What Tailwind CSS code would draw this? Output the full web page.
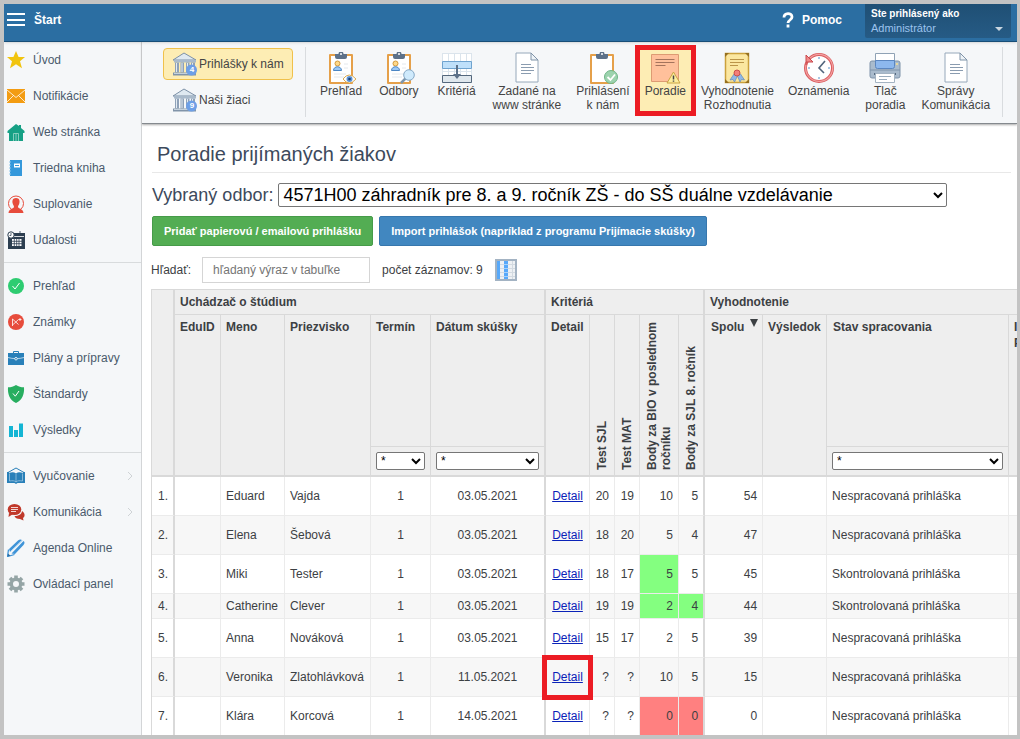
<!DOCTYPE html>
<html lang="sk">
  <head>
    <meta charset="UTF-8" />
    <meta name="viewport" content="width=device-width, initial-scale=1.0" />
    <title>Poradie prijímaných žiakov</title>
    <script src="https://cdn.jsdelivr.net/npm/@tailwindcss/browser@4"></script>
  </head>
  <body class="h-screen overflow-hidden flex flex-col bg-white border-4 border-r-3 border-[#c3c3c3] font-['Liberation_Sans',Arial,sans-serif] text-xs text-[#3c4043]">

    <!-- shared icon shapes -->
    <svg class="hidden">
      <symbol id="building" viewBox="0 0 26 26">
        <path d="M1 9 L12 2 L24 9Z" fill="#dfe9f1" stroke="#7d91a7" />
        <path d="M2 9h22v2.500H2z" fill="#a9bacb" />
        <path d="M3 11.500h4v10H3zM8.500 11.500h3.500v10H8.500zM14 11.500h3.500v10H14zM19 11.500h4v10h-4z" fill="#8ea1b8" />
        <path d="M4.500 12v9M10 12v9M15.500 12v9M20.500 12v9" stroke="#e3ebf2" />
        <path d="M1 21.500h23v3H1z" fill="#8194a9" />
        <path d="M2 22.500h21" stroke="#c4d1dc" />
        <circle cx="19.500" cy="19" r="5.500" fill="#6e9fe6" />
      </symbol>
      <symbol id="clipboard" viewBox="0 0 28 32">
        <rect x="2" y="2" width="24" height="30" rx="1" fill="#e5a04a" />
        <rect x="4" y="4" width="20" height="26" fill="#fff" />
        <path d="M8 2h3.500a2.500 2.500 0 0 1 5 0h3.500v3q0 2-2 2h-8q-2 0-2-2z" fill="#5d7189" />
        <circle cx="14" cy="2" r="1" fill="#fff" />
      </symbol>
      <symbol id="person" viewBox="0 0 28 32">
        <circle cx="10.500" cy="11.500" r="2.500" fill="#ffd98a" stroke="#d39a3c" />
        <path d="M6.500 18.500c0-5 8-5 8 0z" fill="#9cc8f5" stroke="#4b86c4" />
        <path d="M17 12h4M17 16h4M7 22h12M7 25h10" stroke="#e4e8ec" />
      </symbol>
      <symbol id="page" viewBox="0 0 24 32">
        <path d="M1 1h15l7 7v22H1z" fill="#fff" stroke="#96a8ba" />
        <path d="M16 1v7h7z" fill="#eef3f7" stroke="#7f93a8" />
        <path d="M6 12.500h10M6 15.500h13M6 18.500h13M6 21.500h10" stroke="#8a9cb0" />
      </symbol>
    </svg>

    <header class="relative z-10 shrink-0 h-[38px] flex items-start bg-[#2b6ea2] border-b border-[#174e78] shadow text-white">
      <button aria-label="Menu" class="ml-[3px] mt-2 w-[18px] h-[15px] flex flex-col justify-between py-px">
        <span class="h-0.5 w-full bg-white"></span>
        <span class="h-0.5 w-full bg-white"></span>
        <span class="h-0.5 w-full bg-white"></span>
      </button>
      <a href="#" class="ml-[9px] mt-2 leading-4 font-bold">Štart</a>
      <a href="#" class="ml-auto mt-[7px] flex items-center gap-2 leading-4 font-bold">
        <svg class="w-3 h-[18px]" viewBox="0 0 12 18" fill="none" stroke="#fff" stroke-width="2.800">
          <path d="M2 6.500C2 1.500 10 1.500 10 6c0 3-4 3-4 6" />
          <path d="M6 13.500v3" />
        </svg>
        Pomoc
      </a>
      <button class="ml-[23px] mr-[6px] w-[146px] h-[34px] px-[6px] pt-1 flex items-end justify-between text-left bg-linear-to-b from-[#1f4f74] to-[#265b85] rounded-b-xs">
        <span class="self-start">
          <span class="block text-[10px] leading-3 font-bold">Ste prihlásený ako</span>
          <span class="block text-[11px] leading-4 text-[#9cc3ee]">Administrátor</span>
        </span>
        <svg class="w-2 h-1 mb-[7px] mr-0.5" viewBox="0 0 8 4"><path d="M0 0h8L4 4z" fill="#c9d6e0" /></svg>
      </button>
    </header>

    <div class="flex-1 min-h-0 flex">
      <nav class="shrink-0 w-[138px] bg-[#f5f7f9] border-r border-[#d3d5d7] text-[#4a5a6c]">
        <a href="#" class="flex items-center h-9 pl-[3px] gap-[8px]">
          <svg class="w-[18px] h-[18px]" viewBox="0 0 18 18"><path d="M9 0l2.600 6H18l-5 4.300 2 7-6-4-6 4 2-7-5-4.300h6.400z" fill="#f1c40f" /></svg>
          Úvod
        </a>
        <a href="#" class="flex items-center h-9 pl-[3px] gap-[8px]">
          <svg class="w-[18px] h-[18px]" viewBox="0 0 18 18"><path d="M0 2h18v14H0z" fill="#f39c12" /><path d="M0 3l9 7.500L18 3M0 15l6.500-6.500M18 15l-6.500-6.500" fill="none" stroke="#fff" stroke-width=".8" /></svg>
          Notifikácie
        </a>
        <a href="#" class="flex items-center h-9 pl-[3px] gap-[8px]">
          <svg class="w-[18px] h-[18px]" viewBox="0 0 18 18"><path d="M9 1l3 2V2h2v3l3.500 3v2H16v8H2v-8H.500V8z" fill="#16a085" /><path d="M6.500 18v-7.500h5V18M9 10.500V18" fill="none" stroke="#9fd8cb" stroke-width=".8" /></svg>
          Web stránka
        </a>
        <a href="#" class="flex items-center h-9 pl-[3px] gap-[8px]">
          <svg class="w-[18px] h-[18px]" viewBox="0 0 18 18"><path d="M3 1h12v16H3z" fill="#3498db" /><path d="M2 3h2M2 6h2M2 9h2M2 12h2M2 15h2" stroke="#8fc6ea" /><path d="M7 4.500h6v4H7z" fill="#fff" /><path d="M8 6.500h4" stroke="#3498db" /></svg>
          Triedna kniha
        </a>
        <a href="#" class="flex items-center h-9 pl-[3px] gap-[8px]">
          <svg class="w-[18px] h-[18px]" viewBox="0 0 18 18"><circle cx="9" cy="8.500" r="7.500" fill="none" stroke="#e74c3c" stroke-width="1" /><path d="M9 3c3.500 0 4 3 3.300 5.500-.3 1.500-1.300 2-1.300 3.500 0 1.500 5.500 2 5.500 6h-15c0-4 5.500-4.500 5.500-6 0-1.500-1-2-1.300-3.500C5 6 5.500 3 9 3z" fill="#e74c3c" /></svg>
          Suplovanie
        </a>
        <a href="#" class="flex items-center h-9 pl-[3px] gap-[8px]">
          <svg class="w-[18px] h-[18px]" viewBox="0 0 18 18"><path d="M1 2h17v16H1z" fill="#2c3e50" /><path d="M5 5.500h12" stroke="#fff" stroke-width=".8" /><path d="M5 8h9.500v7H5z" fill="#fff" /><path d="M7.300 8v7M9.700 8v7M12 8v7M5 10.300h10M5 12.700h10" stroke="#2c3e50" stroke-width=".8" /><circle cx="4" cy="4" r="3.200" fill="#fff" stroke="#2c3e50" /><path d="M4 2v2.500H2.500M13 0v3" fill="none" stroke="#2c3e50" stroke-width=".8" /></svg>
          Udalosti
        </a>
        <hr class="mt-1 mb-[5px] border-t border-[#d8dbdd]" />
        <a href="#" class="flex items-center h-9 pl-[3px] gap-[8px]">
          <svg class="w-[18px] h-[18px]" viewBox="0 0 18 18"><circle cx="9" cy="9" r="8" fill="#2ecc71" /><path d="M5.500 9l2.500 3 4.500-6" fill="none" stroke="#fff" /></svg>
          Prehľad
        </a>
        <a href="#" class="flex items-center h-9 pl-[3px] gap-[8px]">
          <svg class="w-[18px] h-[18px]" viewBox="0 0 18 18"><circle cx="9" cy="9" r="8" fill="#e74c3c" /><path d="M5.500 13V6l6 5.500M5.500 12l6-5.500M11.500 6.500h3M13 5v3" fill="none" stroke="#fff" stroke-width=".8" /></svg>
          Známky
        </a>
        <a href="#" class="flex items-center h-9 pl-[3px] gap-[8px]">
          <svg class="w-[18px] h-[18px]" viewBox="0 0 18 18"><path d="M1 4h16v12H1z" fill="#2980b9" /><path d="M6.500 4V2.500h5V4" fill="none" stroke="#2980b9" /><path d="M1 8.500c5 1.500 11 1.500 16 0" fill="none" stroke="#d5e7f3" stroke-width=".8" /><circle cx="9" cy="9.700" r="1.300" fill="#2980b9" stroke="#fff" stroke-width=".8" /></svg>
          Plány a prípravy
        </a>
        <a href="#" class="flex items-center h-9 pl-[3px] gap-[8px]">
          <svg class="w-[18px] h-[18px]" viewBox="0 0 18 18"><path d="M9 0c2.500 1.500 5 2.300 8 2.300C17.500 9 15.500 15 9 18 2.500 15 .500 9 1 2.300 4 2.300 6.500 1.500 9 0z" fill="#27ae60" /><path d="M6 8.500l2.300 2.700L12 6" fill="none" stroke="#fff" /></svg>
          Štandardy
        </a>
        <a href="#" class="flex items-center h-9 pl-[3px] gap-[8px]">
          <svg class="w-[18px] h-[18px]" viewBox="0 0 18 18"><path d="M2 5h4v11H2zM7 9h4v7H7zM12 2.500h4V16h-4z" fill="#14b5d4" /></svg>
          Výsledky
        </a>
        <hr class="mt-1 mb-[5px] border-t border-[#d8dbdd]" />
        <a href="#" class="flex items-center h-9 pl-[3px] gap-[8px]">
          <svg class="w-[18px] h-[18px]" viewBox="0 0 18 18"><path d="M1 5.500L9 1l8 4.500" fill="none" stroke="#2980b9" /><path d="M0 5h2v1c3-1 5-1 7 .5 2-1.500 4-1.500 7-.5V5h2v11h-7.500L9 17l-1.500-1H0z" fill="#2980b9" /><path d="M2.500 6.500V14M15.500 6.500V14M9 7v8M2.500 14c3-.5 5-.5 6.500 1 1.500-1.500 3.500-1.500 6.500-1" fill="none" stroke="#a9cde5" stroke-width=".7" /></svg>
          Vyučovanie
          <svg class="ml-auto mr-2 w-[6px] h-2" viewBox="0 0 6 8" fill="none" stroke="#cfd3d6"><path d="M1 0l4 4-4 4" /></svg>
        </a>
        <a href="#" class="flex items-center h-9 pl-[3px] gap-[8px]">
          <svg class="w-[18px] h-[18px]" viewBox="0 0 18 18"><ellipse cx="7.500" cy="6.500" rx="6.800" ry="5.500" fill="#c0392b" /><path d="M2 10l-.5 4L6 11z" fill="#c0392b" /><path d="M15 8c4 2.500 2.500 6 1 7l.5 2.500-3.500-1.500c-3 0-5-1-5.500-3 4 0 7.500-2 7.500-5z" fill="#c0392b" /><path d="M4 4.500h7M4 6.500h7M4 8.500h5" stroke="#fff" stroke-width=".8" /></svg>
          Komunikácia
          <svg class="ml-auto mr-2 w-[6px] h-2" viewBox="0 0 6 8" fill="none" stroke="#cfd3d6"><path d="M1 0l4 4-4 4" /></svg>
        </a>
        <a href="#" class="flex items-center h-9 pl-[3px] gap-[8px]">
          <svg class="w-[18px] h-[18px]" viewBox="0 0 18 18"><path d="M2 10L11 1.500q2-1.500 4-.5l-12 12zM4.500 14.500L16.500 2q2 1.500 0 4L8 15z" fill="#3f94d8" /><path d="M1.500 10.500L.500 17.500l7-2" fill="none" stroke="#3f94d8" stroke-width="1.300" /><path d="M3.500 12.500l12-11" stroke="#b9dcf6" /><path d="M.500 17.500l.5-3 2.500 2.300z" fill="#2b6ea2" /></svg>
          Agenda Online
        </a>
        <a href="#" class="flex items-center h-9 pl-[3px] gap-[8px]">
          <svg class="w-[18px] h-[18px]" viewBox="0 0 18 18" fill="none" stroke="#95a5a6"><circle cx="9" cy="9" r="4.700" stroke-width="3.400" /><path d="M9 .5v3M9 14.500v3M.500 9h3M14.500 9h3M3 3l2.200 2.200M12.800 12.800L15 15M15 3l-2.200 2.200M5.200 12.800L3 15" stroke-width="3.600" /></svg>
          Ovládací panel
        </a>
      </nav>

      <main class="flex-1 min-w-0 flex flex-col">
        <div class="shrink-0 h-[82px] flex bg-[#f5f7f9] border-b border-[#84898e] shadow-[0_1px_2px_#aaaaaa] pl-[21px] leading-[14px] text-[#444444]">
          <div class="shrink-0 w-[130px] pt-[6px]">
            <button class="w-full h-8 pl-2 flex items-center gap-px rounded-sm bg-[#fdedb4] border border-[#f0c14b]">
              <span class="relative"><svg class="w-[26px] h-[26px]"><use href="#building" /></svg><span class="absolute left-4 top-[14px] w-2 text-center text-[8px] leading-[10px] font-bold text-white">4</span></span>
              Prihlášky k nám
            </button>
            <button class="w-full h-8 mt-1 pl-[9px] flex items-center gap-px">
              <span class="relative"><svg class="w-[26px] h-[26px]"><use href="#building" /></svg><span class="absolute left-4 top-[14px] w-2 text-center text-[8px] leading-[10px] font-bold text-white">9</span></span>
              Naši žiaci
            </button>
          </div>
          <div class="shrink-0 ml-3 mt-[5px] h-[70px] pl-[6px] pr-1 flex items-start border-x border-[#d9dcdf]">
            <button class="pt-[5px] px-2 flex flex-col items-center">
              <svg class="w-8 h-8" viewBox="0 0 32 32"><use href="#clipboard" width="28" height="32" x="2" /><use href="#person" width="28" height="32" x="2" /><path d="M18 27q6-8 13 0-7 8-13 0z" fill="#fff" stroke="#d9a84e" /><circle cx="24.500" cy="27" r="3" fill="#5b93d8" /><circle cx="24.500" cy="27" r="1.300" fill="#1f3f6b" /></svg>
              Prehľad
            </button>
            <button class="pt-[5px] px-[9px] flex flex-col items-center">
              <svg class="w-8 h-8" viewBox="0 0 32 32"><use href="#clipboard" width="28" height="32" x="2" /><use href="#person" width="28" height="32" x="2" /><path d="M18 31l5-5" stroke="#7e96ad" stroke-width="2.500" /><circle cx="26" cy="23" r="5.300" fill="#cfeafc" stroke="#86a9c6" /></svg>
              Odbory
            </button>
            <button class="pt-[5px] pl-[10px] pr-2 flex flex-col items-center">
              <svg class="w-8 h-8" viewBox="0 0 32 32"><path d="M1 1h30v30H1z" fill="#fff" /><path d="M1 1.500h30M1.500 1v30M7.500 1v30M13.500 1v30M19.500 1v30M25.500 1v30M30.500 1v30M1 19.500h30" stroke="#dbe4ec" /><path d="M1.500 9.500h29v7h-29z" fill="#bfe0fa" stroke="#6fa3cf" /><path d="M1.500 23.500h29v7h-29z" fill="#dfe7ed" stroke="#54677c" /><path d="M16 13v12" stroke="#5d7189" stroke-width="2" /><path d="M12 22h8l-4 5z" fill="#5d7189" /></svg>
              Kritériá
            </button>
            <button class="pt-[5px] pl-[9px] pr-2 flex flex-col items-center">
              <svg class="w-6 h-8"><use href="#page" /></svg>
              Zadané na<br />www stránke
            </button>
            <button class="pt-[5px] px-[7px] flex flex-col items-center">
              <svg class="w-8 h-8" viewBox="0 0 32 32"><use href="#clipboard" width="28" height="32" x="1" /><circle cx="24" cy="25" r="6.500" fill="#9dd3ae" stroke="#6fb587" /><path d="M20.500 25l3 3 4.500-5.500" fill="none" stroke="#fff" stroke-width="1.800" /></svg>
              Prihlásení<br />k nám
            </button>
            <button class="relative pt-[5px] h-[66px] px-2 flex flex-col items-center bg-[#fdedb4]">
              <svg class="w-8 h-8" viewBox="0 0 32 32"><path d="M2.500 2.500h27v27h-27z" fill="#ffc09b" stroke="#dd9b73" /><path d="M6.500 7.500h19M6.500 10.500h19M6.500 13.500h10" stroke="#a4735c" /><path d="M24.500 20l6.500 11H18z" fill="#fdeea0" stroke="#c9a443" /><path d="M24.500 23.500v4M24.500 28.500v1.200" stroke="#444" stroke-width="1.500" /></svg>
              Poradie
              <span class="absolute -inset-x-0.5 -top-0.5 -bottom-[3px] border-5 border-[#ec1c24]"></span>
            </button>
            <button class="pt-[5px] px-[7px] flex flex-col items-center">
              <svg class="w-8 h-8" viewBox="0 0 32 32"><path d="M4.500 1.500h23v29h-23z" fill="#fbe7a0" stroke="#cba13c" stroke-width="1.500" /><path d="M4 1h4L4 5zM28 1v4l-4-4zM4 31v-4l4 4zM28 31h-4l4-4z" fill="#96701f" /><path d="M9 7.500h14M9 10.500h14M9 13.500h8" stroke="#bb9548" /><path d="M13 22l-4 6 3-.5L13.500 30l3-6 2.500 6 1.500-2.500 3 .5-4-6z" fill="#8fb8e8" stroke="#6689b2" stroke-width=".7" /><circle cx="16" cy="21" r="3" fill="#f37f79" stroke="#c94f4b" /></svg>
              Vyhodnotenie<br />Rozhodnutia
            </button>
            <button class="pt-[5px] pl-[7px] pr-2 flex flex-col items-center">
              <svg class="w-8 h-8" viewBox="0 0 32 32"><circle cx="16" cy="16" r="13.500" fill="#fff" stroke="#d95c5f" stroke-width="3" /><path d="M7 6a13.500 13.500 0 1 1-4 7" fill="none" stroke="#f3a0a0" stroke-width="1.200" /><path d="M0 8h10v2H0z" fill="#f5f7f9" /><path d="M3 3v7h7z" fill="#f08a8a" stroke="#c9484d" /><path d="M16 5v2M16 25v2M5 16h2M25 16h2" stroke="#a9c8e4" stroke-width="2" /><path d="M22 9l-6 7 5 5" fill="none" stroke="#50647b" stroke-width="1.600" /></svg>
              Oznámenia
            </button>
            <button class="pt-[5px] px-2 flex flex-col items-center">
              <svg class="w-8 h-8" viewBox="0 0 32 32"><rect x="1" y="9" width="30" height="17" rx="2" fill="#a9bbcd" stroke="#7e93aa" /><path d="M1 18h30" stroke="#7e93aa" /><path d="M6.500 9V1.500h19V9" fill="#fff" stroke="#8fa2b5" /><path d="M6.500 8.500h19v6q0 2-2 2h-15q-2 0-2-2z" fill="#8db8ee" stroke="#5b86c0" /><path d="M5 21h22v2H5z" fill="#566a80" /><path d="M6.500 21.500h19v9h-19z" fill="#fff" stroke="#a3b3c2" /><path d="M10 24.500h12M10 27.500h8" stroke="#9badbd" /><circle cx="28" cy="12" r="1" fill="#ffe28a" /></svg>
              Tlač<br />poradia
            </button>
            <button class="pt-[5px] px-2 flex flex-col items-center">
              <svg class="w-6 h-8"><use href="#page" /></svg>
              Správy<br />Komunikácia
            </button>
          </div>
        </div>

        <h1 class="ml-[10px] mr-[6px] pl-[5px] pt-4 pb-1 text-xl leading-7 border-b border-[#e8e8e8] text-[#3d4a5c]">Poradie prijímaných žiakov</h1>

        <div class="mt-[10px] ml-[10px] flex items-center gap-[5px] text-lg leading-6 text-[#3d4a5c]">
          <label for="odbor">Vybraný odbor:</label>
          <select id="odbor" class="w-[669px] h-6 bg-white border border-[#767676] rounded-[2px] leading-5 text-black">
            <option>4571H00 záhradník pre 8. a 9. ročník ZŠ - do SŠ duálne vzdelávanie</option>
          </select>
        </div>

        <div class="mt-[9px] ml-[10px] flex gap-[6px] text-[11px]">
          <button class="h-[30px] px-[11px] bg-[#53ad53] border border-[#469b49] rounded-[2px] font-bold text-white">Pridať papierovú / emailovú prihlášku</button>
          <button class="h-[30px] px-[11px] bg-[#4187c0] border border-[#3777ad] rounded-[2px] font-bold text-white">Import prihlášok (napríklad z programu Prijímacie skúšky)</button>
        </div>

        <div class="mt-[11px] ml-[9px] flex items-center">
          <label for="hladat">Hľadať:</label>
          <input id="hladat" type="text" placeholder="hľadaný výraz v tabuľke" class="ml-[11px] w-[168px] h-[26px] px-[10px] border border-[#d5d5d5] placeholder:text-[#757575]" />
          <span class="ml-3">počet záznamov: 9</span>
          <button aria-label="Stĺpce" class="ml-3">
            <svg class="block w-[22px] h-[22px]" viewBox="0 0 22 22"><path d="M1 1h20v20H1z" fill="#eef1f4" /><path d="M1 5.500h20M1 9.500h20M1 13.500h20M1 17.500h20M17.500 1v20" stroke="#d3dae1" /><path d="M1 1h4v20H1zM9 1h4v20H9z" fill="#58a9fa" /><path d="M9 5.500h4M9 9.500h4M9 13.500h4M9 17.500h4" stroke="#a9d2fb" /><path d="M1 1h20v20H1z" fill="none" stroke="#a3b3c3" stroke-width="2" /></svg>
          </button>
        </div>

        <div class="mt-[6px] ml-[9px] flex-1 min-h-0 overflow-hidden">
          <table class="table-fixed w-[898px] border-separate border-spacing-0 border-l border-[#d9d9d9] leading-4">
            <colgroup>
              <col class="w-[23px]" />
              <col class="w-[46px]" />
              <col class="w-[64px]" />
              <col class="w-[86px]" />
              <col class="w-[60px]" />
              <col class="w-[115px]" />
              <col class="w-[44px]" />
              <col class="w-[25px]" />
              <col class="w-[25px]" />
              <col class="w-[39px]" />
              <col class="w-[26px]" />
              <col class="w-[58px]" />
              <col class="w-[64px]" />
              <col class="w-[182px]" />
              <col class="w-[40px]" />
            </colgroup>
            <thead class="bg-[#eeeeee] text-left align-top [&_th]:border-[#d9d9d9]">
              <tr class="h-[26px]">
                <th rowspan="3" class="border-t border-r-2 border-b-2"></th>
                <th colspan="5" class="pl-[5px] pt-1 border-t border-b border-r-2">Uchádzač o štúdium</th>
                <th colspan="5" class="pl-[5px] pt-1 border-t border-b border-r-2">Kritériá</th>
                <th colspan="4" class="pl-[5px] pt-1 border-t border-b">Vyhodnotenie</th>
              </tr>
              <tr class="h-[132px]">
                <th rowspan="2" class="pl-[5px] pt-1 border-r border-b-2">EduID</th>
                <th rowspan="2" class="pl-[5px] pt-1 border-r border-b-2">Meno</th>
                <th rowspan="2" class="pl-[5px] pt-1 border-r border-b-2">Priezvisko</th>
                <th class="pl-[5px] pt-1 border-r border-b">Termín</th>
                <th class="pl-[5px] pt-1 border-r-2 border-b">Dátum skúšky</th>
                <th rowspan="2" class="pl-[5px] pt-1 border-r border-b-2">Detail</th>
                <th rowspan="2" class="pl-[5px] pb-[5px] align-bottom border-r border-b-2"><span class="block h-[150px] rotate-180 [writing-mode:vertical-rl] leading-[14px]">Test SJL</span></th>
                <th rowspan="2" class="pl-[5px] pb-[5px] align-bottom border-r border-b-2"><span class="block h-[150px] rotate-180 [writing-mode:vertical-rl] leading-[14px]">Test MAT</span></th>
                <th rowspan="2" class="pl-[5px] pb-[5px] align-bottom border-r border-b-2"><span class="block h-[150px] rotate-180 [writing-mode:vertical-rl] leading-[14px]">Body za BIO v poslednom ročníku</span></th>
                <th rowspan="2" class="pl-[5px] pb-[5px] align-bottom border-r-2 border-b-2"><span class="block h-[150px] rotate-180 [writing-mode:vertical-rl] leading-[14px]">Body za SJL 8. ročník</span></th>
                <th rowspan="2" class="pl-[6px] pr-1 pt-1 border-r border-b-2"><span class="flex justify-between">Spolu <svg class="w-2 h-2" viewBox="0 0 8 8"><path d="M0 0h8L4 8z" fill="#3c4043" /></svg></span></th>
                <th rowspan="2" class="pl-[5px] pt-1 border-r border-b-2">Výsledok</th>
                <th class="pl-[6px] pt-1 border-r border-b">Stav spracovania</th>
                <th rowspan="2" class="pl-[5px] pt-1 border-b-2">I<br />P</th>
              </tr>
              <tr class="h-[30px]">
                <th class="px-[5px] pt-[5px] border-r border-b-2"><select aria-label="Termín" class="block w-full h-[18px] bg-white border border-[#767676] rounded-[2px] font-normal text-black"><option>*</option></select></th>
                <th class="px-[5px] pt-[5px] border-r-2 border-b-2"><select aria-label="Dátum skúšky" class="block w-full h-[18px] bg-white border border-[#767676] rounded-[2px] font-normal text-black"><option>*</option></select></th>
                <th class="px-[5px] pt-[5px] border-r border-b-2"><select aria-label="Stav spracovania" class="block w-full h-[18px] bg-white border border-[#767676] rounded-[2px] font-normal text-black"><option>*</option></select></th>
              </tr>
            </thead>
            <tbody id="ziaci" class="[&_td]:border-[#ebebeb] [&_td]:border-b [&_td]:px-[5px]"></tbody>
          </table>
        </div>
      </main>
    </div>

    <script>
      const N = 'Nespracovaná prihláška';
      const S = 'Skontrolovaná prihláška';
      const green = 'bg-[#84ff80]';
      const red = 'bg-[#ff8080]';

      const students = [
        { name: 'Eduard', surname: 'Vajda', date: '03.05.2021', sjl: 20, mat: 19, bio: 10, sjl8: 5, total: 54, state: N },
        { name: 'Elena', surname: 'Šebová', date: '03.05.2021', sjl: 18, mat: 20, bio: 5, sjl8: 4, total: 47, state: N },
        { name: 'Miki', surname: 'Tester', date: '03.05.2021', sjl: 18, mat: 17, bio: 5, sjl8: 5, total: 45, state: S, bioColor: green },
        { name: 'Catherine', surname: 'Clever', date: '03.05.2021', sjl: 19, mat: 19, bio: 2, sjl8: 4, total: 44, state: S, bioColor: green, sjl8Color: green, short: true },
        { name: 'Anna', surname: 'Nováková', date: '03.05.2021', sjl: 15, mat: 17, bio: 2, sjl8: 5, total: 39, state: N },
        { name: 'Veronika', surname: 'Zlatohlávková', date: '11.05.2021', sjl: '?', mat: '?', bio: 10, sjl8: 5, total: 15, state: N, marked: true },
        { name: 'Klára', surname: 'Korcová', date: '14.05.2021', sjl: '?', mat: '?', bio: 0, sjl8: 0, total: 0, state: N, bioColor: red, sjl8Color: red },
      ];

      document.getElementById('ziaci').innerHTML = students.map((s, i) => `
        <tr class="${s.short ? 'h-[25px]' : 'h-[39px]'} even:bg-[#f7f7f7]">
          <td class="text-right border-r-2 border-r-[#d9d9d9]!">${i + 1}.</td>
          <td class="border-r"></td>
          <td class="border-r">${s.name}</td>
          <td class="border-r">${s.surname}</td>
          <td class="border-r text-center">1</td>
          <td class="border-r-2 border-r-[#d9d9d9]! text-center">${s.date}</td>
          <td class="border-r text-center ${s.marked ? 'relative z-10' : ''}">
            <a href="#" class="underline text-[#0a22b8]">Detail</a>
            ${s.marked ? '<span class="absolute -inset-x-1 -top-[3px] -bottom-1 border-5 border-[#ec1c24]"></span>' : ''}
          </td>
          <td class="border-r text-right">${s.sjl}</td>
          <td class="border-r text-right">${s.mat}</td>
          <td class="border-r text-right ${s.bioColor || ''}">${s.bio}</td>
          <td class="border-r-2 border-r-[#d9d9d9]! text-right ${s.sjl8Color || ''}">${s.sjl8}</td>
          <td class="border-r text-right">${s.total}</td>
          <td class="border-r"></td>
          <td class="border-r">${s.state}</td>
          <td></td>
        </tr>
      `).join('');
    </script>
  </body>
</html>
